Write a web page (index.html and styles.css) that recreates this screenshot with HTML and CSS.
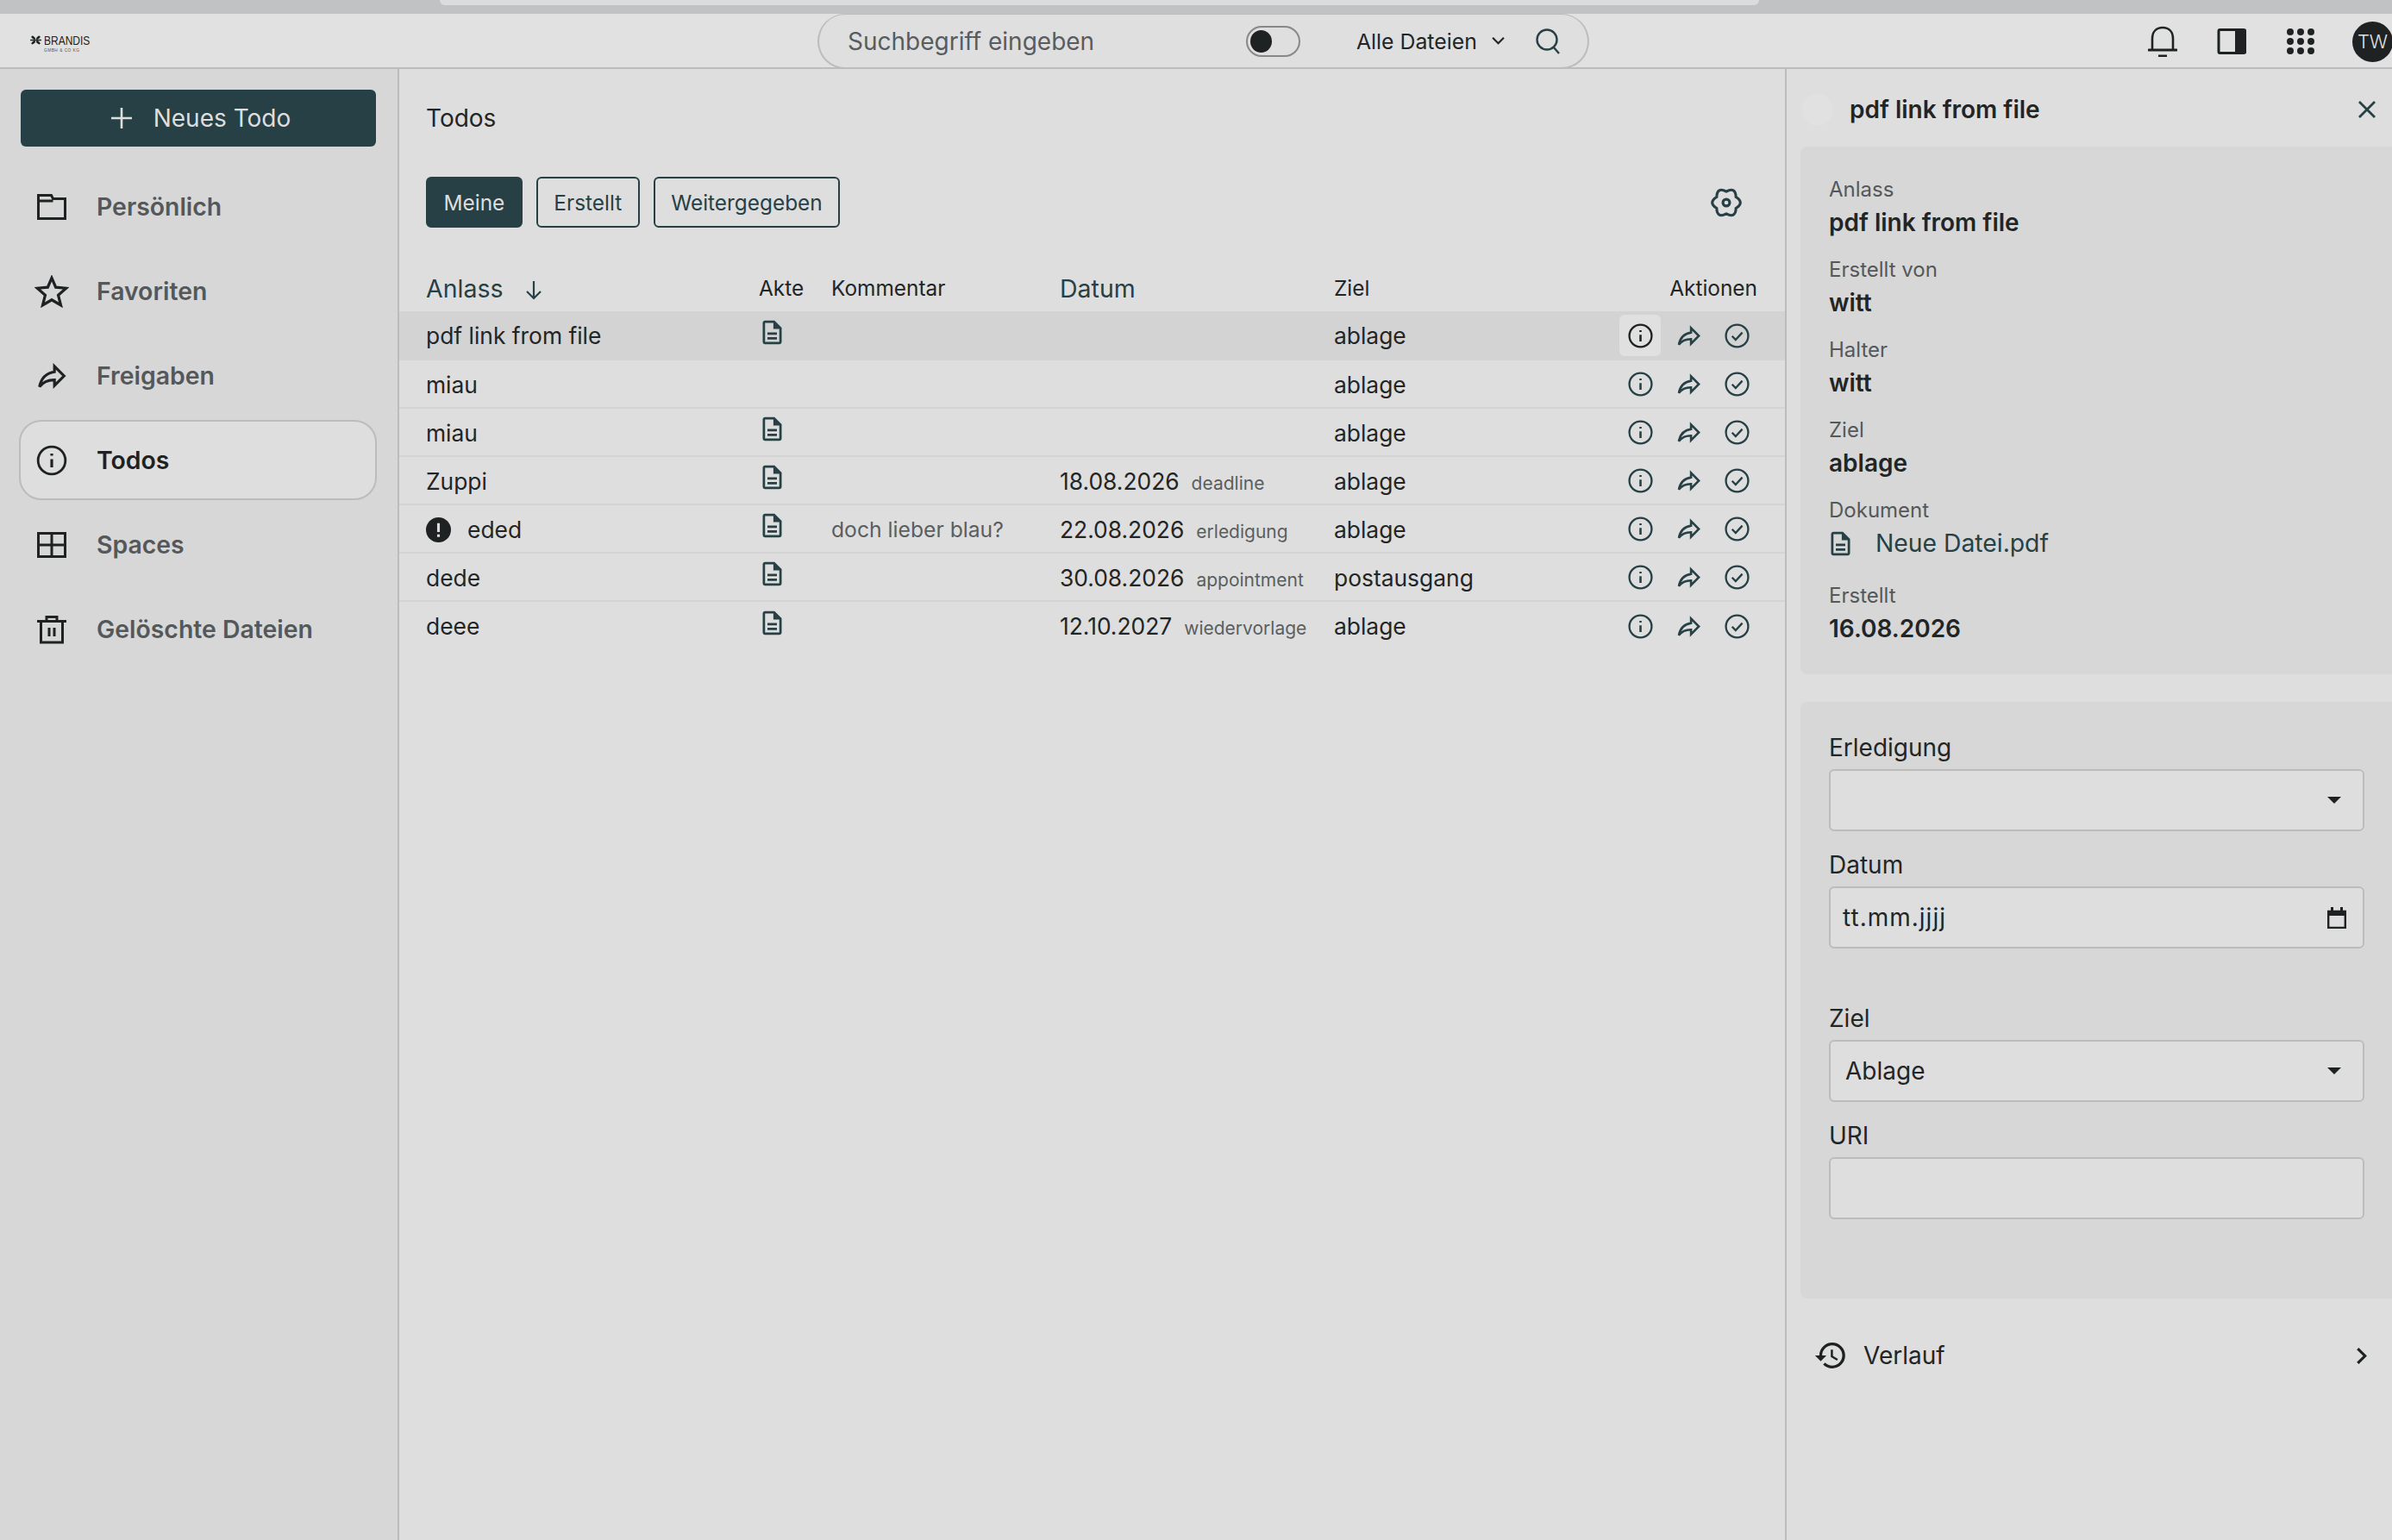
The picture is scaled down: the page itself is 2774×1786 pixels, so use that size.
FILE: index.html
```html
<!DOCTYPE html>
<html lang="de">
<head>
    <meta charset="UTF-8">
    <title>Todos</title>
    <link rel="stylesheet" href="styles.css">
</head>
<body>
    <svg class="icon-defs">
        <symbol id="i-info" viewBox="0 0 24 24">
            <circle cx="12" cy="12" r="10" fill="none" stroke="currentColor" stroke-width="1.8"/>
            <path d="M12 11v6M12 7v1.6" fill="none" stroke="currentColor" stroke-width="2"/>
        </symbol>
        <symbol id="i-share" viewBox="0 0 24 24">
            <path d="M14 9V5l7 7-7 7v-4.1c-5 0-8.5 1.6-11 5.1 1-5 4-10 11-11z" fill="none" stroke="currentColor" stroke-width="2"/>
        </symbol>
        <symbol id="i-check" viewBox="0 0 24 24">
            <circle cx="12" cy="12" r="10" fill="none" stroke="currentColor" stroke-width="1.8"/>
            <path d="M7.5 12.2l3.2 3.4 6-6.6" fill="none" stroke="currentColor" stroke-width="1.8"/>
        </symbol>
        <symbol id="i-doc" viewBox="0 0 24 24">
            <path fill="currentColor" d="M8 16h8v2H8zm0-4h8v2H8zm6-10H6c-1.1 0-2 .9-2 2v16c0 1.1.89 2 1.99 2H18c1.1 0 2-.9 2-2V8l-6-6zm4 18H6V4h7v5h5v11z"/>
        </symbol>
    </svg>

    <div class="tab-strip"><div class="tab-strip-inner"></div></div>

    <header class="topbar">
        <div class="logo">
            <svg class="logo-mark" viewBox="0 0 14 12">
                <g fill="currentColor">
                    <ellipse cx="4" cy="3" rx="3" ry="1.600" transform="rotate(40 4 3)"/>
                    <ellipse cx="10" cy="3" rx="3" ry="1.600" transform="rotate(-40 10 3)"/>
                    <ellipse cx="4" cy="9" rx="3" ry="1.600" transform="rotate(-40 4 9)"/>
                    <ellipse cx="10" cy="9" rx="3" ry="1.600" transform="rotate(40 10 9)"/>
                    <rect x="0" y="5.200" width="14" height="1.600"/>
                </g>
            </svg>
            <div class="logo-text">
                <span class="logo-name">BRANDIS</span>
                <span class="logo-sub">GMBH &amp; CO KG</span>
            </div>
        </div>
        <div class="search">
            <span class="search-text">Suchbegriff eingeben</span>
            <span class="toggle"><span class="toggle-knob"></span></span>
            <span class="search-scope">Alle Dateien</span>
            <svg class="scope-chevron" viewBox="0 0 18 12"><path d="M2 2l7 7 7-7" fill="none" stroke="currentColor" stroke-width="2.4"/></svg>
            <svg class="search-icon" viewBox="0 0 28 30"><circle cx="13" cy="13" r="11.5" fill="none" stroke="currentColor" stroke-width="2.4"/><path d="M20 21l7 8" fill="none" stroke="currentColor" stroke-width="2.4"/></svg>
        </div>
        <div class="top-icons">
            <svg class="top-icon" viewBox="0 0 34 36"><path d="M5 27V15C5 6.500 10 2 17 2s12 4.500 12 13v12" fill="none" stroke="currentColor" stroke-width="2.600"/><path d="M1 26.500h32a1.200 1.200 0 0 1 0 3H1a1.200 1.200 0 0 1 0-3zM12 33.500h10v2.500H12z" fill="currentColor"/></svg>
            <svg class="top-icon" viewBox="0 0 34 30"><rect x="2" y="1.500" width="30.500" height="27" rx="1.500" fill="none" stroke="currentColor" stroke-width="3"/><rect x="21" y="1" width="13" height="28" rx="1.500" fill="currentColor"/></svg>
            <svg class="top-icon" viewBox="0 0 34 32">
                <g fill="currentColor">
                    <circle cx="5" cy="5" r="4"/><circle cx="17" cy="5" r="4"/><circle cx="29" cy="5" r="4"/>
                    <circle cx="5" cy="16" r="4"/><circle cx="17" cy="16" r="4"/><circle cx="29" cy="16" r="4"/>
                    <circle cx="5" cy="27" r="4"/><circle cx="17" cy="27" r="4"/><circle cx="29" cy="27" r="4"/>
                </g>
            </svg>
            <span class="avatar">TW</span>
        </div>
    </header>

    <div class="layout">
        <aside class="sidebar">
            <button class="new-btn">
                <svg class="new-plus" viewBox="0 0 24 24"><path d="M12 0v24M0 12h24" fill="none" stroke="currentColor" stroke-width="2.600"/></svg>
                Neues Todo
            </button>
            <nav class="nav">
                <a class="nav-item">
                    <svg class="nav-icon" viewBox="0 0 34 30"><path d="M1.500 1.500h15l2 4h14v23h-31zM1.500 8h17" fill="none" stroke="currentColor" stroke-width="3"/></svg>
                    Persönlich
                </a>
                <a class="nav-item">
                    <svg class="nav-icon icon-star" viewBox="0 0 37 35"><path d="M18.500 3l4.300 10 11.200 1-8.500 7.500 2.700 10.700-9.700-5.700-9.700 5.700 2.700-10.700L3 14l11.200-1z" fill="none" stroke="currentColor" stroke-width="3"/></svg>
                    Favoriten
                </a>
                <a class="nav-item">
                    <svg class="nav-icon icon-lg" viewBox="0 0 24 24"><use href="#i-share"/></svg>
                    Freigaben
                </a>
                <a class="nav-item active">
                    <svg class="nav-icon icon-lg" viewBox="0 0 24 24"><use href="#i-info"/></svg>
                    Todos
                </a>
                <a class="nav-item">
                    <svg class="nav-icon" viewBox="0 0 34 30"><path d="M1.500 1.500h31v27h-31zM17 1.500v27M1.500 15h31" fill="none" stroke="currentColor" stroke-width="3"/></svg>
                    Spaces
                </a>
                <a class="nav-item">
                    <svg class="nav-icon" viewBox="0 0 34 34"><path d="M0 7.500h34M11 7V2.500h12V7M4.500 8v24h25V8" fill="none" stroke="currentColor" stroke-width="3"/><path d="M12.500 15h3v10h-3zM18.500 15h3v10h-3z" fill="currentColor"/></svg>
                    Gelöschte Dateien
                </a>
            </nav>
        </aside>

        <main class="main">
            <h1 class="page-title">Todos</h1>
            <div class="filter-row">
                <button class="filter-btn selected">Meine</button>
                <button class="filter-btn">Erstellt</button>
                <button class="filter-btn">Weitergegeben</button>
                <svg class="gear" viewBox="0 0 32 32"><path fill="none" stroke="currentColor" stroke-width="2.800" d="M25.960 10.250Q35 16 25.960 21.750Q25.500 32.450 16 27.500Q6.500 32.450 6.040 21.750Q-3 16 6.040 10.250Q6.500-.45 16 4.500Q25.500-.45 25.960 10.250z"/><circle cx="16" cy="16" r="3.500" fill="none" stroke="currentColor" stroke-width="2.800"/></svg>
            </div>

            <table class="todo-table">
                <colgroup>
                    <col class="col-anlass"><col class="col-akte"><col class="col-kommentar"><col class="col-datum"><col class="col-ziel"><col class="col-aktionen">
                </colgroup>
                <thead>
                    <tr>
                        <th class="sortable">Anlass <svg class="sort-arrow" viewBox="0 0 22 24"><path d="M11 2v20M3 14l8 8 8-8" fill="none" stroke="currentColor" stroke-width="2.200"/></svg></th>
                        <th>Akte</th>
                        <th>Kommentar</th>
                        <th class="sortable">Datum</th>
                        <th>Ziel</th>
                        <th class="th-actions">Aktionen</th>
                    </tr>
                </thead>
                <tbody>
                    <tr class="row-active">
                        <td>pdf link from file</td>
                        <td><svg class="doc-icon"><use href="#i-doc"/></svg></td>
                        <td></td>
                        <td></td>
                        <td>ablage</td>
                        <td><div class="row-actions"><span class="act hovered"><svg><use href="#i-info"/></svg></span><span class="act"><svg><use href="#i-share"/></svg></span><span class="act"><svg><use href="#i-check"/></svg></span></div></td>
                    </tr>
                    <tr>
                        <td>miau</td>
                        <td></td>
                        <td></td>
                        <td></td>
                        <td>ablage</td>
                        <td><div class="row-actions"><span class="act"><svg><use href="#i-info"/></svg></span><span class="act"><svg><use href="#i-share"/></svg></span><span class="act"><svg><use href="#i-check"/></svg></span></div></td>
                    </tr>
                    <tr>
                        <td>miau</td>
                        <td><svg class="doc-icon"><use href="#i-doc"/></svg></td>
                        <td></td>
                        <td></td>
                        <td>ablage</td>
                        <td><div class="row-actions"><span class="act"><svg><use href="#i-info"/></svg></span><span class="act"><svg><use href="#i-share"/></svg></span><span class="act"><svg><use href="#i-check"/></svg></span></div></td>
                    </tr>
                    <tr>
                        <td>Zuppi</td>
                        <td><svg class="doc-icon"><use href="#i-doc"/></svg></td>
                        <td></td>
                        <td>18.08.2026<span class="date-kind">deadline</span></td>
                        <td>ablage</td>
                        <td><div class="row-actions"><span class="act"><svg><use href="#i-info"/></svg></span><span class="act"><svg><use href="#i-share"/></svg></span><span class="act"><svg><use href="#i-check"/></svg></span></div></td>
                    </tr>
                    <tr>
                        <td><svg class="alert-icon" viewBox="0 0 28 28"><circle cx="14" cy="14" r="14" fill="currentColor"/><path d="M12.500 6.500h3v10h-3zM12.500 19h3v3h-3z" fill="#dedede"/></svg>eded</td>
                        <td><svg class="doc-icon"><use href="#i-doc"/></svg></td>
                        <td class="comment">doch lieber blau?</td>
                        <td>22.08.2026<span class="date-kind">erledigung</span></td>
                        <td>ablage</td>
                        <td><div class="row-actions"><span class="act"><svg><use href="#i-info"/></svg></span><span class="act"><svg><use href="#i-share"/></svg></span><span class="act"><svg><use href="#i-check"/></svg></span></div></td>
                    </tr>
                    <tr>
                        <td>dede</td>
                        <td><svg class="doc-icon"><use href="#i-doc"/></svg></td>
                        <td></td>
                        <td>30.08.2026<span class="date-kind">appointment</span></td>
                        <td>postausgang</td>
                        <td><div class="row-actions"><span class="act"><svg><use href="#i-info"/></svg></span><span class="act"><svg><use href="#i-share"/></svg></span><span class="act"><svg><use href="#i-check"/></svg></span></div></td>
                    </tr>
                    <tr>
                        <td>deee</td>
                        <td><svg class="doc-icon"><use href="#i-doc"/></svg></td>
                        <td></td>
                        <td>12.10.2027<span class="date-kind">wiedervorlage</span></td>
                        <td>ablage</td>
                        <td><div class="row-actions"><span class="act"><svg><use href="#i-info"/></svg></span><span class="act"><svg><use href="#i-share"/></svg></span><span class="act"><svg><use href="#i-check"/></svg></span></div></td>
                    </tr>
                </tbody>
            </table>
        </main>

        <section class="detail">
            <div class="detail-head">
                <span class="detail-badge"></span>
                <h2 class="detail-title">pdf link from file</h2>
                <svg class="detail-close" viewBox="0 0 22 22"><path d="M2 2l18 18M20 2L2 20" fill="none" stroke="currentColor" stroke-width="2.800"/></svg>
            </div>

            <div class="card info-card">
                <div class="info-field"><div class="info-label">Anlass</div><div class="info-value">pdf link from file</div></div>
                <div class="info-field"><div class="info-label">Erstellt von</div><div class="info-value">witt</div></div>
                <div class="info-field"><div class="info-label">Halter</div><div class="info-value">witt</div></div>
                <div class="info-field"><div class="info-label">Ziel</div><div class="info-value">ablage</div></div>
                <div class="info-field doc-field">
                    <div class="info-label">Dokument</div>
                    <div class="doc-link"><svg class="doc-link-icon"><use href="#i-doc"/></svg>Neue Datei.pdf</div>
                </div>
                <div class="info-field"><div class="info-label">Erstellt</div><div class="info-value">16.08.2026</div></div>
            </div>

            <div class="card form-card">
                <div class="form-label">Erledigung</div>
                <div class="form-box"><span></span><span class="caret"></span></div>
                <div class="form-label">Datum</div>
                <div class="form-box date-box">
                    <span>tt.mm.jjjj</span>
                    <svg class="cal-icon" viewBox="0 0 22 25"><path d="M1.200 5h19.600v19H1.200z" fill="none" stroke="currentColor" stroke-width="2.400"/><path d="M1 4h20v6H1zM4 0h3v4H4zM15 0h3v4h-3z" fill="currentColor"/></svg>
                </div>
                <div class="form-label label-spaced">Ziel</div>
                <div class="form-box"><span>Ablage</span><span class="caret"></span></div>
                <div class="form-label">URI</div>
                <div class="form-box"></div>
            </div>

            <div class="history">
                <svg class="history-icon" viewBox="0 0 24 24"><path fill="currentColor" d="M13 3a9 9 0 0 0-9 9H1l3.890 3.890.070.140L9 12H6c0-3.870 3.130-7 7-7s7 3.130 7 7-3.130 7-7 7c-1.930 0-3.680-.790-4.940-2.060l-1.420 1.420A8.954 8.954 0 0 0 13 21a9 9 0 0 0 0-18zm-1 5v5l4.280 2.540.720-1.210-3.500-2.080V8H12z" transform="translate(-.5 0)"/></svg>
                <span class="history-text">Verlauf</span>
                <svg class="history-chevron" viewBox="0 0 12 20"><path d="M2 2l8 8-8 8" fill="none" stroke="currentColor" stroke-width="3"/></svg>
            </div>
        </section>
    </div>
</body>
</html>
```

FILE: styles.css
```css
/* Base */
* {
    margin: 0;
    padding: 0;
    box-sizing: border-box;
}

html, body {
    height: 100%;
}

body {
    font-family: Inter, "Noto Sans", sans-serif;
    font-size: 28px;
    color: #222526;
    background: #dedede;
    overflow: hidden;
}

.icon-defs {
    display: none;
}

/* Strip above the app */
.tab-strip {
    height: 16px;
    background: #c0c2c3;
}

.tab-strip-inner {
    width: 1530px;
    height: 6px;
    margin-left: 510px;
    background: #dcdcdc;
    border-radius: 0 0 8px 8px;
}

/* Top bar */
.topbar {
    height: 64px;
    display: grid;
    grid-template-columns: 948px 895px 1fr;
    background: #e1e1e1;
    border-bottom: 2px solid #bcbcbc;
}

.logo {
    display: flex;
    align-items: flex-start;
    gap: 3px;
    padding: 25px 0 0 35px;
}

.logo-mark {
    width: 13px;
    height: 11px;
    color: #1f2223;
}

.logo-text {
    display: flex;
    flex-direction: column;
    transform: scaleX(.8);
    transform-origin: left top;
}

.logo-name {
    font-family: "Liberation Sans", sans-serif;
    font-size: 15px;
    line-height: 12px;
    color: #1f2223;
}

.logo-sub {
    margin-top: 2px;
    font-family: "Liberation Sans", sans-serif;
    font-size: 6px;
    line-height: 6px;
    letter-spacing: .6px;
    color: #555;
}

.search {
    height: 64px;
    display: flex;
    align-items: center;
    padding-left: 33px;
    border: 2px solid #bcbcbc;
    border-top-width: 1px;
    border-radius: 32px;
    background: #dfdfdf;
}

.search-text {
    width: 462px;
    font-size: 28px;
    color: #585c5e;
}

.toggle {
    width: 63px;
    height: 36px;
    padding: 3px;
    border: 2px solid #888;
    border-radius: 18px;
    margin-right: 65px;
}

.toggle-knob {
    display: block;
    width: 25px;
    height: 26px;
    border-radius: 50%;
    background: #1f2223;
}

.search-scope {
    font-size: 24.8px;
    color: #222526;
}

.scope-chevron {
    width: 17px;
    height: 11px;
    margin-left: 16px;
    color: #222526;
}

.search-icon {
    width: 28px;
    height: 30px;
    margin-left: 35px;
    color: #274045;
}

.top-icons {
    display: flex;
    align-items: center;
    padding-left: 648px;
}

.top-icon {
    width: 34px;
    height: 36px;
    margin-right: 46px;
    color: #1f2223;
}

.avatar {
    flex: none;
    width: 47px;
    height: 47px;
    margin-left: -3px;
    display: flex;
    align-items: center;
    justify-content: center;
    border-radius: 50%;
    background: #1f2223;
    color: #e1e1e1;
    font-size: 22px;
    font-weight: 300;
}

/* Three columns */
.layout {
    height: 1706px;
    display: grid;
    grid-template-columns: 463px 1609px 702px;
}

/* Sidebar */
.sidebar {
    padding: 24px 24px 0 24px;
    background: #d7d7d7;
    border-right: 2px solid #bcbcbc;
}

.new-btn {
    width: 412px;
    height: 66px;
    padding-left: 6px;
    display: flex;
    align-items: center;
    justify-content: center;
    gap: 25px;
    border: none;
    border-radius: 6px;
    background: #274045;
    color: #dedede;
    font-family: inherit;
    font-size: 28px;
}

.new-plus {
    width: 24px;
    height: 24px;
}

.nav {
    margin: 23px 0 0 -2px;
    display: flex;
    flex-direction: column;
    gap: 6px;
}

.nav-item {
    height: 93px;
    margin-bottom: -1px;
    display: flex;
    align-items: center;
    gap: 35px;
    padding-left: 19px;
    border: 2px solid transparent;
    border-radius: 26px;
    color: #54585a;
    font-size: 28.4px;
    font-weight: 600;
}

.nav-item.active {
    background: #dedede;
    border-color: #bcbcbc;
    color: #1f2223;
}

.nav-icon {
    flex: none;
    width: 34px;
    height: 34px;
    color: #1f2223;
}

.nav-icon.icon-lg {
    width: 38px;
    height: 38px;
    margin: 0 -2px;
}

.nav-icon.icon-star {
    width: 40px;
    height: 38px;
    margin: 0 -3px;
}

/* Main list */
.main {
    background: #dedede;
    border-right: 2px solid #bcbcbc;
}

.page-title {
    margin: 40px 0 0 31px;
    font-size: 28px;
    font-weight: 400;
    line-height: 34px;
}

.filter-row {
    margin-top: 51px;
    padding: 0 50px 0 31px;
    display: flex;
    align-items: center;
}

.filter-btn {
    height: 59px;
    padding: 0 18.500px;
    margin-right: 16px;
    border: 2px solid #274045;
    border-radius: 6px;
    background: transparent;
    color: #274045;
    font-family: inherit;
    font-size: 24.4px;
}

.filter-btn.selected {
    background: #274045;
    color: #dedede;
}

.gear {
    width: 36px;
    height: 36px;
    margin-left: auto;
    color: #274045;
    overflow: visible;
}

.todo-table {
    width: 1607px;
    margin-top: 43px;
    table-layout: fixed;
    border-collapse: collapse;
    font-size: 26.4px;
}

.col-anlass { width: 417px; }
.col-akte { width: 84px; }
.col-kommentar { width: 265px; }
.col-datum { width: 318px; }
.col-ziel { width: 330px; }
.col-aktionen { width: 193px; }

th {
    height: 54px;
    text-align: left;
    font-size: 24.4px;
    font-weight: 400;
}

th.sortable {
    font-size: 28.5px;
    font-weight: 400;
    color: #274045;
}

.sort-arrow {
    width: 22px;
    height: 24px;
    margin-left: 16px;
    vertical-align: -3px;
}

th.th-actions {
    text-align: right;
    padding-right: 32px;
}

td {
    height: 56px;
    padding-top: 1px;
    border-bottom: 2px solid #d4d4d4;
    white-space: nowrap;
}

tbody tr:last-child td {
    border-bottom: none;
}

th:first-child,
td:first-child {
    padding-left: 31px;
}

.row-active td {
    background: #d3d3d3;
}

.doc-icon {
    display: block;
    width: 33px;
    height: 33px;
    margin: -8px 0 0 -1px;
    color: #274045;
}

.alert-icon {
    width: 29px;
    height: 29px;
    margin-right: 19px;
    vertical-align: -5px;
    color: #1f2223;
}

.comment {
    font-size: 24.7px;
    color: #5a5e60;
}

.date-kind {
    margin-left: 14px;
    font-size: 21px;
    color: #5a5e60;
}

.row-actions {
    padding-left: 1px;
    display: flex;
    gap: 8px;
}

.act {
    width: 48px;
    height: 48px;
    display: flex;
    align-items: center;
    justify-content: center;
    border-radius: 6px;
    color: #274045;
}

.act svg {
    width: 31px;
    height: 31px;
}

.act.hovered {
    background: #e0e0e0;
    color: #1f2223;
}

/* Detail panel */
.detail {
    background: #dedede;
    padding-left: 16px;
}

.detail-head {
    height: 90px;
    padding: 4px 18px 0 1px;
    display: flex;
    align-items: center;
}

.detail-badge {
    width: 37px;
    height: 37px;
    margin-right: 19px;
    border-radius: 50%;
    background: #e1e1e1;
}

.detail-title {
    font-size: 28px;
    font-weight: 600;
}

.detail-close {
    width: 22px;
    height: 22px;
    margin-left: auto;
    color: #274045;
}

.card {
    background: #d7d7d7;
    border-radius: 8px 0 0 8px;
    padding: 0 32px 0 33px;
}

.info-card {
    height: 612px;
    padding-top: 33px;
}

.info-field {
    margin-bottom: 19px;
}

.info-label {
    font-size: 24px;
    line-height: 34px;
    color: #54585a;
}

.info-value {
    font-size: 28px;
    line-height: 42px;
    margin-bottom: -2px;
    font-weight: 600;
}

.doc-field {
    margin-bottom: 25px;
}

.doc-link {
    display: flex;
    align-items: center;
    gap: 24px;
    font-size: 28.3px;
    line-height: 42px;
    margin-bottom: -2px;
    color: #274045;
}

.doc-link-icon {
    width: 33px;
    height: 33px;
    margin-left: -3px;
}

.form-card {
    height: 692px;
    margin-top: 32px;
    padding-top: 36px;
}

.form-label {
    font-size: 28px;
    line-height: 34px;
    margin-bottom: 8px;
}

.label-spaced {
    margin-top: 64px;
}

.form-box {
    height: 72px;
    padding: 0 25px 0 17px;
    display: flex;
    align-items: center;
    justify-content: space-between;
    background: #dedede;
    border: 2px solid #bcbcbc;
    border-radius: 6px;
}

.form-box + .form-label:not(.label-spaced) {
    margin-top: 22px;
}

.date-box {
    padding: 0 19px 0 14px;
    letter-spacing: 1px;
}

.caret {
    width: 0;
    height: 0;
    border-left: 8px solid transparent;
    border-right: 8px solid transparent;
    border-top: 8px solid #1f2223;
}

.cal-icon {
    width: 22px;
    height: 25px;
    color: #1f2223;
}

.history {
    height: 46px;
    margin-top: 43px;
    padding: 0 29px 0 16px;
    display: flex;
    align-items: center;
}

.history-icon {
    width: 40px;
    height: 40px;
    margin-right: 17px;
    color: #1f2223;
}

.history-chevron {
    width: 13px;
    height: 21px;
    margin-left: auto;
    color: #1f2223;
}
```
